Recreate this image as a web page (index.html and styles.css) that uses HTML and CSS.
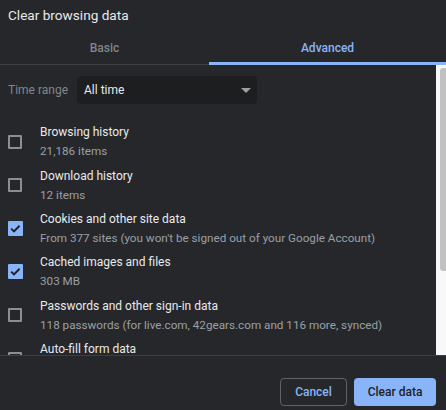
FILE: index.html
```html
<!DOCTYPE html>
<html>
<head>
<meta charset="utf-8">
<link rel="stylesheet" href="styles.css">
</head>
<body>
<div class="dialog">
  <div class="title">Clear browsing data</div>
  <div class="tabs">
    <div class="tab">Basic</div>
    <div class="tab active">Advanced</div>
  </div>
  <div class="body">
    <div class="content">
      <div class="range">
        <span class="range-label">Time range</span>
        <div class="select">
          <span>All time</span>
          <span class="arrow"></span>
        </div>
      </div>
      <div class="item">
        <span class="box"></span>
        <div class="texts"><div class="label">Browsing history</div><div class="sub">21,186 items</div></div>
      </div>
      <div class="item">
        <span class="box"></span>
        <div class="texts"><div class="label">Download history</div><div class="sub">12 items</div></div>
      </div>
      <div class="item">
        <span class="box checked"><svg viewBox="0 0 15 15" width="15" height="15"><path d="M3.2 7.6 L6 10.4 L11.6 4.8" fill="none" stroke="#202124" stroke-width="2"/></svg></span>
        <div class="texts"><div class="label">Cookies and other site data</div><div class="sub">From 377 sites (you won't be signed out of your Google Account)</div></div>
      </div>
      <div class="item">
        <span class="box checked"><svg viewBox="0 0 15 15" width="15" height="15"><path d="M3.2 7.6 L6 10.4 L11.6 4.8" fill="none" stroke="#202124" stroke-width="2"/></svg></span>
        <div class="texts"><div class="label">Cached images and files</div><div class="sub">303 MB</div></div>
      </div>
      <div class="item">
        <span class="box"></span>
        <div class="texts"><div class="label">Passwords and other sign-in data</div><div class="sub">118 passwords (for live.com, 42gears.com and 116 more, synced)</div></div>
      </div>
      <div class="item">
        <span class="box"></span>
        <div class="texts"><div class="label">Auto-fill form data</div><div class="sub">&nbsp;</div></div>
      </div>
    </div>
    <div class="scrollbar"><div class="thumb"></div></div>
  </div>
  <div class="footer">
    <button class="btn cancel">Cancel</button>
    <button class="btn primary">Clear data</button>
  </div>
</div>
</body>
</html>
```
FILE: styles.css
```css
html, body {
  margin: 0;
  padding: 0;
  background: #26272a;
}
.dialog {
  width: 446px;
  height: 410px;
  display: flex;
  flex-direction: column;
  background: #26272a;
  font-family: Roboto, "Liberation Sans", sans-serif;
  color: #e8eaed;
  overflow: hidden;
}
.title {
  height: 30px;
  line-height: 31px;
  padding-left: 8px;
  font-size: 13.6px;
  color: #e8eaed;
}
.tabs {
  display: flex;
  height: 35px;
  border-bottom: 1px solid #3c4043;
  box-sizing: border-box;
}
.tab {
  display: flex;
  align-items: center;
  justify-content: center;
  font-size: 12px;
  font-weight: 500;
  color: #80868b;
  box-sizing: border-box;
  padding-top: 1px;
}
.tab:first-child { width: 209px; }
.tab.active {
  flex: 1;
  color: #8ab4f8;
  border-bottom: 3px solid #8ab4f8;
  margin-bottom: -1px;
  padding-top: 3px;
}
.body {
  display: flex;
  height: 290px;
  border-bottom: 1px solid #3c4043;
}
.content {
  flex: 1;
  overflow: hidden;
}
.scrollbar {
  width: 10px;
  background: #f8f8f8;
  padding-top: 3px;
}
.thumb {
  margin-left: 4px;
  width: 6px;
  height: 203px;
  background: #c1c1c1;
  border-radius: 3px 0 0 3px;
}
.range {
  display: flex;
  align-items: center;
  padding: 11px 0 16px 8px;
}
.range-label {
  font-size: 12px;
  color: #80868b;
  width: 69px;
}
.select {
  width: 180px;
  height: 28px;
  box-sizing: border-box;
  background: #1d1e20;
  border-radius: 4px;
  display: flex;
  align-items: center;
  justify-content: space-between;
  padding: 0 6px 0 7px;
  font-size: 12px;
  color: #e8eaed;
}
.arrow {
  width: 0;
  height: 0;
  border-left: 5px solid transparent;
  border-right: 5px solid transparent;
  border-top: 5px solid #9aa0a6;
}
.item {
  display: flex;
  align-items: center;
  height: 43.4px;
  padding-left: 8px;
}
.box {
  width: 14px;
  height: 14px;
  box-sizing: border-box;
  border: 2px solid #8a8f94;
  border-radius: 1px;
  flex: none;
  margin-right: 18px;
  display: flex;
  align-items: center;
  justify-content: center;
}
.box.checked {
  border: none;
  background: #8ab4f8;
  width: 15px;
  height: 15px;
  margin-right: 17px;
}
.texts {
  padding-top: 1px;
}
.label {
  font-size: 12px;
  line-height: 18px;
  color: #e8eaed;
}
.sub {
  font-size: 11.7px;
  line-height: 20px;
  color: #9aa0a6;
}
.footer {
  flex: 1;
  display: flex;
  justify-content: flex-end;
  align-items: flex-end;
  gap: 7px;
  padding: 0 10px 4px 0;
}
.btn {
  height: 28px;
  border-radius: 4px;
  font-family: Roboto, "Liberation Sans", sans-serif;
  font-size: 12px;
  font-weight: 500;
  box-sizing: border-box;
  cursor: pointer;
}
.cancel {
  width: 67px;
  background: transparent;
  border: 1px solid #5f6368;
  color: #8ab4f8;
}
.primary {
  width: 82px;
  background: #8ab4f8;
  border: none;
  color: #202124;
}
```
